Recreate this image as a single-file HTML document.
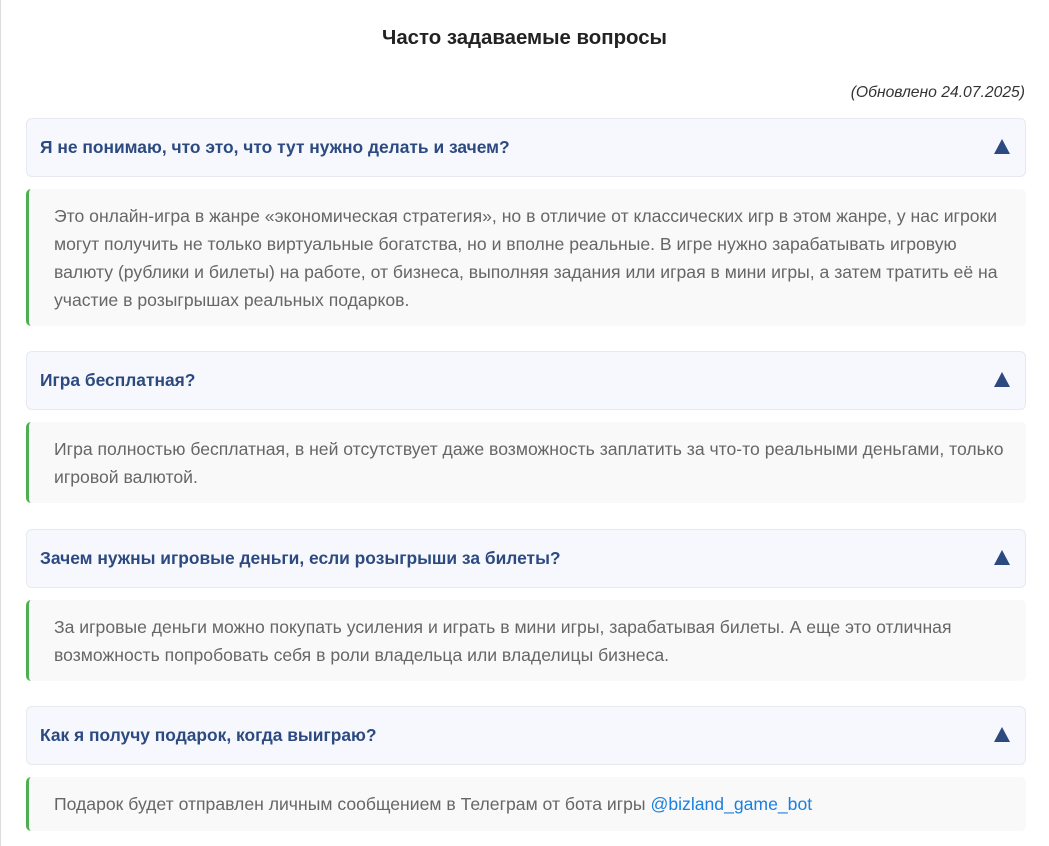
<!DOCTYPE html>
<html><head><meta charset="utf-8"><style>
body{margin:0;background:#fff;font-family:"Liberation Sans",sans-serif;width:1049px;height:846px;overflow:hidden;position:relative}
.lb{position:absolute;left:0;top:0;bottom:0;width:1px;background:#ddd}
h1{position:absolute;left:0;width:1049px;top:27px;margin:0;text-align:center;font-size:20.4px;font-weight:bold;color:#222}
.upd{position:absolute;right:24px;top:84px;font-style:italic;font-size:15.7px;color:#333}
.q{position:absolute;left:26px;height:56px;background:#f6f8fd;border:1px solid #e6e9f0;border-radius:6px;box-sizing:border-box;width:1000px}
.q span{position:absolute;left:13px;top:18px;font-size:17.4px;font-weight:bold;color:#2c4a80}
.q i{position:absolute;right:15px;top:20px;width:0;height:0;border-left:8px solid transparent;border-right:8px solid transparent;border-bottom:15px solid #2c4a80}
.a{position:absolute;left:26px;width:1000px;background:#f9f9f9;border-left:3px solid #4cb050;border-radius:5px;box-sizing:border-box;padding:13px 20px 0 25px;font-size:17.6px;line-height:28px;color:#666}
.a a{color:#1a7fe0;text-decoration:none}
</style></head><body>
<div class="lb"></div>
<h1>Часто задаваемые вопросы</h1>
<div class="upd">(Обновлено 24.07.2025)</div>
<div class="q" style="top:118px;height:59px"><span>Я не понимаю, что это, что тут нужно делать и зачем?</span><i></i></div>
<div class="a" style="top:189px;height:137px">Это онлайн-игра в жанре «экономическая стратегия», но в отличие от классических игр в этом жанре, у нас игроки могут получить не только виртуальные богатства, но и вполне реальные. В игре нужно зарабатывать игровую валюту (рублики и билеты) на работе, от бизнеса, выполняя задания или играя в мини игры, а затем тратить её на участие в розыгрышах реальных подарков.</div>
<div class="q" style="top:351px;height:59px"><span>Игра бесплатная?</span><i></i></div>
<div class="a" style="top:422px;height:81px">Игра полностью бесплатная, в ней отсутствует даже возможность заплатить за что-то реальными деньгами, только игровой валютой.</div>
<div class="q" style="top:529px;height:59px"><span>Зачем нужны игровые деньги, если розыгрыши за билеты?</span><i></i></div>
<div class="a" style="top:600px;height:81px">За игровые деньги можно покупать усиления и играть в мини игры, зарабатывая билеты. А еще это отличная возможность попробовать себя в роли владельца или владелицы бизнеса.</div>
<div class="q" style="top:706px;height:59px"><span>Как я получу подарок, когда выиграю?</span><i></i></div>
<div class="a" style="top:777px;height:54px">Подарок будет отправлен личным сообщением в Телеграм от бота игры <a>@bizland_game_bot</a></div>
</body></html>
